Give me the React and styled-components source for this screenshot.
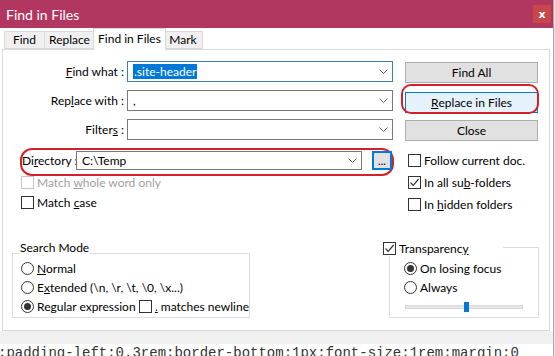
import React from 'react';
import styled, { createGlobalStyle } from 'styled-components';

const GlobalStyle = createGlobalStyle`
  html, body {
    margin: 0;
    padding: 0;
    background: #e9e9e9;
    overflow: hidden;
  }
  body {
    font-family: Lato, "Liberation Sans", sans-serif;
    font-size: 12px;
    color: #000;
  }
  * { box-sizing: border-box; }
`;

const Window = styled.div`
  width: 554px;
  height: 356px;
  display: flex;
  flex-direction: column;
  background: #fff;
  border-right: 1px solid #a8a8a8;
  overflow: hidden;
`;

const TitleBar = styled.div`
  flex: none;
  height: 28px;
  display: flex;
  align-items: center;
  justify-content: space-between;
  padding: 0 2px 0 6px;
  background: #b13761;
  color: #fff;
  font-size: 14px;
`;

const CloseButton = styled.div`
  width: 18px;
  height: 18px;
  display: flex;
  align-items: center;
  justify-content: center;
  background: #c7474c;
  font-family: "DejaVu Sans", sans-serif;
  font-weight: bold;
  font-size: 11px;
`;

const Body = styled.div`
  flex: 1;
  display: flex;
  flex-direction: column;
  padding: 0 3px 0 2px;
  background: #fff;
`;

const TabRow = styled.div`
  flex: none;
  height: 21px;
  display: flex;
  align-items: flex-end;
  padding-left: 2px;
`;

const Tab = styled.div`
  position: relative;
  width: ${p => p.$w}px;
  height: ${p => (p.$active ? 22 : 18)}px;
  margin: 0 ${p => (p.$active ? -2 : 0)}px ${p => (p.$active ? -1 : 0)}px;
  z-index: ${p => (p.$active ? 1 : 0)};
  display: flex;
  align-items: center;
  justify-content: center;
  padding-bottom: ${p => (p.$active ? 3 : 1)}px;
  background: ${p => (p.$active ? '#fff' : '#f0f0f0')};
  border: 1px solid #d9d9d9;
  border-bottom: ${p => (p.$active ? 'none' : '1px solid #d9d9d9')};
  border-left: ${p => (p.$first || p.$active ? '1px solid #d9d9d9' : 'none')};
  white-space: nowrap;
`;

const Panel = styled.div`
  flex: 1;
  display: flex;
  flex-direction: column;
  justify-content: space-between;
  border: 1px solid #d9d9d9;
  background: #fff;
`;

const TopSection = styled.div`
  display: flex;
  padding-top: 11px;
`;

const LeftCol = styled.div`
  width: 390px;
  display: flex;
  flex-direction: column;
`;

const RightCol = styled.div`
  width: 133px;
  margin-left: 12px;
  display: flex;
  flex-direction: column;
  padding-top: 1px;
`;

const FieldRow = styled.div`
  display: flex;
  align-items: center;
  height: 21px;
  margin-bottom: 8px;
`;

const FieldLabel = styled.div`
  width: 121px;
  text-align: right;
  margin-right: 3px;
  white-space: nowrap;
`;

const Combo = styled.div`
  position: relative;
  width: ${p => p.$w}px;
  height: ${p => p.$h || 21}px;
  display: flex;
  align-items: center;
  justify-content: space-between;
  padding: 0 4px 0 5px;
  border: 1px solid ${p => (p.$focused ? '#3f7fb4' : '#7a7a7a')};
  background: #fff;
`;

const Selected = styled.span`
  background: #0078d7;
  color: #fff;
  padding: 0 1px;
  line-height: 15px;
`;

const DirectoryRow = styled.div`
  position: relative;
  display: flex;
  align-items: center;
  height: 24px;
  padding-left: 19px;

  &::after {
    content: '';
    position: absolute;
    left: 17px;
    top: 0;
    width: 370px;
    height: 24px;
    border: 2px solid #d4202a;
    border-radius: 12px;
    pointer-events: none;
  }
`;

const DirLabel = styled.div`
  width: 54px;
  white-space: nowrap;
`;

const BrowseButton = styled.div`
  width: 20px;
  height: 19px;
  margin-left: 10px;
  display: flex;
  align-items: flex-end;
  justify-content: center;
  padding-bottom: 3px;
  background: #e1e1e1;
  border: 2px solid #0078d7;
  font-size: 11px;
  line-height: 8px;
  position: relative;
  z-index: 1;
`;

const CheckList = styled.div`
  display: flex;
  flex-direction: column;
  padding-left: ${p => p.$indent}px;
  margin-top: ${p => p.$top || 0}px;
`;

const CheckRow = styled.div`
  display: flex;
  align-items: center;
  height: ${p => p.$h}px;
  color: ${p => (p.$disabled ? '#a0a0a0' : '#000')};
  white-space: nowrap;
`;

const Box = styled.span`
  flex: none;
  width: 13px;
  height: 13px;
  margin-right: 3px;
  display: flex;
  align-items: center;
  justify-content: center;
  background: #fff;
  border: 1px solid ${p => (p.$disabled ? '#c4c4c4' : '#333')};
`;

const Round = styled.span`
  flex: none;
  width: 13px;
  height: 13px;
  margin-right: 3px;
  border-radius: 50%;
  border: 1px solid #333;
  display: flex;
  align-items: center;
  justify-content: center;
  background: #fff;

  &::after {
    content: '';
    width: 7px;
    height: 7px;
    border-radius: 50%;
    background: ${p => (p.$on ? '#333' : 'transparent')};
  }
`;

const Button = styled.div`
  position: relative;
  height: 21px;
  margin-top: ${p => p.$top || 0}px;
  display: flex;
  align-items: center;
  justify-content: center;
  background: ${p => (p.$default ? '#e5f1fb' : '#e1e1e1')};
  border: 1px solid ${p => (p.$default ? '#0078d7' : '#adadad')};

  ${p => p.$marked && `
    &::after {
      content: '';
      position: absolute;
      left: -5px;
      right: -2px;
      top: -9px;
      bottom: -2px;
      border: 2px solid #d4202a;
      border-radius: 10px;
      pointer-events: none;
    }
  `}
`;

const BottomRow = styled.div`
  display: flex;
  justify-content: space-between;
  align-items: flex-end;
  padding: 0 10px 12px 9px;
`;

const GroupBox = styled.div`
  position: relative;
  width: ${p => p.$w}px;
  height: ${p => p.$h}px;
  border: 1px solid #dcdcdc;
  padding: ${p => p.$pad};
  display: flex;
  flex-direction: column;
`;

const GroupTitle = styled.div`
  position: absolute;
  top: ${p => p.$top}px;
  left: ${p => p.$left}px;
  width: ${p => (p.$w ? `${p.$w}px` : 'auto')};
  height: 16px;
  padding: 0 ${p => (p.$w ? 0 : 1)}px;
  display: flex;
  align-items: center;
  background: #fff;
  white-space: nowrap;
`;

const RadioRow = styled.div`
  display: flex;
  align-items: center;
  height: 19px;
  white-space: nowrap;
`;

const RadioText = styled.span`
  width: ${p => (p.$w ? `${p.$w}px` : 'auto')};
`;

const SliderRow = styled.div`
  height: 19px;
  display: flex;
  align-items: center;
  padding-left: 1px;
`;

const Track = styled.div`
  position: relative;
  width: 118px;
  height: 4px;
  background: #e7e7e7;
  border: 1px solid #d6d6d6;
`;

const Thumb = styled.div`
  position: absolute;
  top: -4px;
  width: 5px;
  height: 10px;
  background: #0078d7;
`;

const Footer = styled.div`
  flex: none;
  height: 13px;
  background: #f0f0f0;
`;

const CodeStrip = styled.div`
  flex: none;
  height: 12px;
  overflow: hidden;
  background: #fff;
  font-family: "Liberation Mono", monospace;
  font-size: 14px;
  line-height: 19px;
  color: #333;
  white-space: nowrap;
  margin-left: -2px;
`;

const Chevron = () => (
  <svg width="9" height="5" viewBox="0 0 9 5">
    <path d="M0.5 0.5 L4.5 4.5 L8.5 0.5" fill="none" stroke="#606060" strokeWidth="1" />
  </svg>
);

const Check = () => (
  <svg width="11" height="11" viewBox="0 0 11 11">
    <path d="M1.5 5.5 L4.2 8.3 L9.6 2" fill="none" stroke="#333" strokeWidth="1.2" />
  </svg>
);

function Checkbox({ checked, disabled, children, h = 20 }) {
  return (
    <CheckRow $h={h} $disabled={disabled}>
      <Box $disabled={disabled}>{checked && <Check />}</Box>
      <span>{children}</span>
    </CheckRow>
  );
}

function Radio({ on, children, w }) {
  return (
    <RadioRow>
      <Round $on={on} />
      <RadioText $w={w}>{children}</RadioText>
    </RadioRow>
  );
}

function App() {
  const opacity = 50;
  return (
    <>
      <GlobalStyle />
      <Window>
        <TitleBar>
          <span>Find in Files</span>
          <CloseButton>x</CloseButton>
        </TitleBar>
        <Body>
          <TabRow>
            <Tab $w={41} $first>Find</Tab>
            <Tab $w={50}>Replace</Tab>
            <Tab $w={73} $active>Find in Files</Tab>
            <Tab $w={39}>Mark</Tab>
          </TabRow>
          <Panel>
            <TopSection>
              <LeftCol>
                <FieldRow>
                  <FieldLabel><u>F</u>ind what :</FieldLabel>
                  <Combo $w={266} $focused>
                    <Selected>.site-header</Selected>
                    <Chevron />
                  </Combo>
                </FieldRow>
                <FieldRow>
                  <FieldLabel>Rep<u>l</u>ace with :</FieldLabel>
                  <Combo $w={266}>
                    <span>,</span>
                    <Chevron />
                  </Combo>
                </FieldRow>
                <FieldRow>
                  <FieldLabel>Filter<u>s</u> :</FieldLabel>
                  <Combo $w={266}>
                    <span />
                    <Chevron />
                  </Combo>
                </FieldRow>
                <DirectoryRow>
                  <DirLabel>Di<u>r</u>ectory :</DirLabel>
                  <Combo $w={286} $h={19}>
                    <span>C:\Temp</span>
                    <Chevron />
                  </Combo>
                  <BrowseButton>...</BrowseButton>
                </DirectoryRow>
                <CheckList $indent={18}>
                  <Checkbox disabled>Match <u>w</u>hole word only</Checkbox>
                  <Checkbox>Match <u>c</u>ase</Checkbox>
                </CheckList>
              </LeftCol>
              <RightCol>
                <Button>Find All</Button>
                <Button $top={9} $default $marked><u>R</u>eplace in Files</Button>
                <Button $top={7}>Close</Button>
                <CheckList $indent={3} $top={8}>
                  <Checkbox h={22}>Follow current doc.</Checkbox>
                  <Checkbox h={22} checked>In all su<u>b</u>-folders</Checkbox>
                  <Checkbox h={22}>In <u>h</u>idden folders</Checkbox>
                </CheckList>
              </RightCol>
            </TopSection>
            <BottomRow>
              <GroupBox $w={238} $h={65} $pad="5px 0 0 8px">
                <GroupTitle $top={-15} $left={6}>Search Mode</GroupTitle>
                <Radio><u>N</u>ormal</Radio>
                <Radio>E<u>x</u>tended (\n, \r, \t, \0, \x...)</Radio>
                <RadioRow>
                  <Round $on />
                  <RadioText $w={106}>Re<u>g</u>ular expression</RadioText>
                  <Box />
                  <span><u>.</u> matches newline</span>
                </RadioRow>
              </GroupBox>
              <GroupBox $w={150} $h={71} $pad="11px 0 0 14px">
                <GroupTitle $top={-8} $left={-7} $w={120}>
                  <Box><Check /></Box>
                  <span>Transparenc<u>y</u></span>
                </GroupTitle>
                <Radio on>On losing focus</Radio>
                <Radio>Always</Radio>
                <SliderRow>
                  <Track>
                    <Thumb style={{ left: `${opacity}%` }} />
                  </Track>
                </SliderRow>
              </GroupBox>
            </BottomRow>
          </Panel>
        </Body>
        <Footer />
        <CodeStrip>:padding-left:0.3rem;border-bottom:1px;font-size:1rem;margin:0</CodeStrip>
      </Window>
    </>
  );
}

export default App;
